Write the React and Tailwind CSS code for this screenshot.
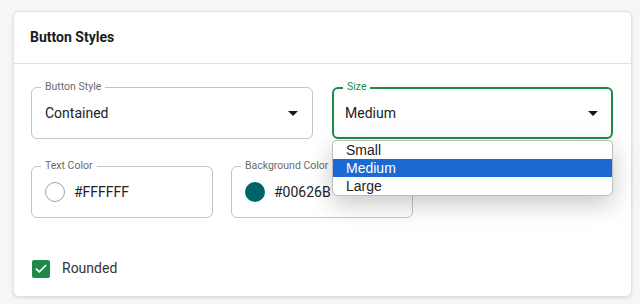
import { Check } from "lucide-react";

function Field({ label, focused, className, children }) {
  return (
    <div
      className={
        "relative h-[52px] rounded-md flex items-center " +
        (focused ? "border-2 border-[#1e8a48] " : "border border-[#c4c4c4] ") +
        className
      }
    >
      <span
        className={
          "absolute left-[9px] px-[4px] bg-white text-[10.5px] leading-none " +
          (focused ? "top-[-7px] text-[#1e8a48]" : "top-[-6px] text-[#6b6b6b]")
        }
      >
        {label}
      </span>
      {children}
    </div>
  );
}

export default function App() {
  return (
    <div
      className="w-[640px] h-[304px] bg-[#f6f6f8] pt-[11px] pl-[13px]"
      style={{ fontFamily: "Roboto, 'Liberation Sans', sans-serif" }}
    >
      <div className="w-[619px] h-[286px] bg-white rounded-md border border-[#e2e2e6] shadow-[0_1px_3px_rgba(0,0,0,0.12)]">
        <div className="h-[52px] border-b border-[#e0e0e0] flex items-center pl-[16px]">
          <h1 className="text-[14px] font-bold text-[#1c1c1c]">Button Styles</h1>
        </div>

        <div className="pl-[17px] pt-[23px]">
          <div className="flex gap-[19px]">
            <Field label="Button Style" className="w-[282px]">
              <span className="pl-[13px] text-[14px] text-[#222]">Contained</span>
              <svg width="10" height="5" viewBox="0 0 10 5" className="absolute right-[14px] top-[23px]">
                <path d="M0 0h10L5 5z" fill="#1a1a1a" />
              </svg>
            </Field>
            <div className="relative">
              <Field label="Size" focused className="w-[281px]">
                <span className="pl-[11px] text-[14px] text-[#222]">Medium</span>
                <svg width="10" height="5" viewBox="0 0 10 5" className="absolute right-[13px] top-[22px]">
                  <path d="M0 0h10L5 5z" fill="#1a1a1a" />
                </svg>
              </Field>
              <ul
                className="absolute z-10 left-0 top-[53px] w-[281px] bg-white border border-[#bdbdbd] rounded-b-md rounded-t-sm overflow-hidden shadow-[0_8px_24px_rgba(0,0,0,0.22)] text-[14px] leading-[18px] text-[#222]"
                style={{ fontFamily: "'Liberation Sans', Arial, sans-serif" }}
              >
                <li className="pl-[13px] h-[18px]">Small</li>
                <li className="pl-[13px] h-[18px] bg-[#1b69d3] text-white">Medium</li>
                <li className="pl-[13px] h-[18px]">Large</li>
              </ul>
            </div>
          </div>

          <div className="flex gap-[18px] mt-[27px]">
            <Field label="Text Color" className="w-[182px]">
              <span className="ml-[13px] w-[20px] h-[20px] rounded-full border border-[#9aa3b0] bg-white" />
              <span className="ml-[9px] text-[14px] text-[#222]">#FFFFFF</span>
            </Field>
            <Field label="Background Color" className="w-[182px]">
              <span className="ml-[13px] w-[20px] h-[20px] rounded-full bg-[#00626B]" />
              <span className="ml-[9px] text-[14px] text-[#222]">#00626B</span>
            </Field>
          </div>

          <label className="flex items-center mt-[40px]">
            <span className="ml-[1px] w-[18px] h-[18px] rounded-[2px] bg-[#1e8a48] flex items-center justify-center">
              <Check size={14} strokeWidth={3} color="white" />
            </span>
            <span className="ml-[12px] text-[14px] text-[#333]">Rounded</span>
          </label>
        </div>
      </div>
    </div>
  );
}
